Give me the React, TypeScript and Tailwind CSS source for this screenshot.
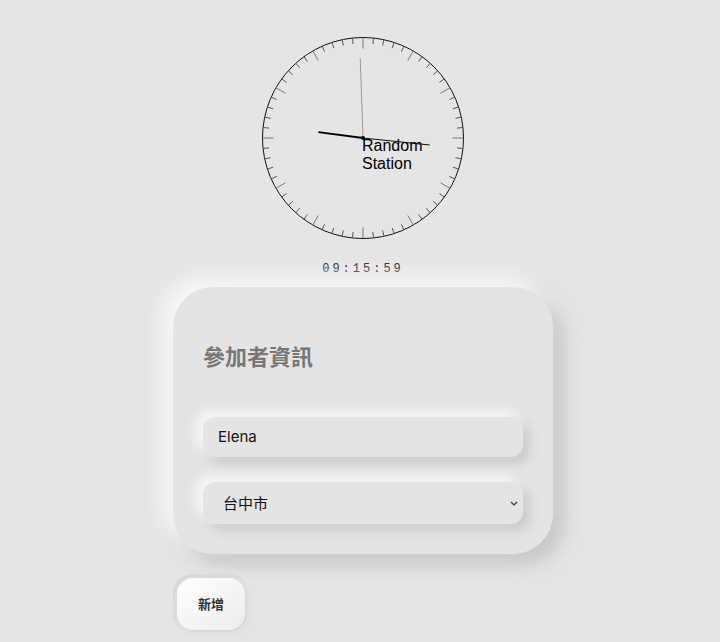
const ticks = Array.from({ length: 60 }, (_, i) => i)

function Clock() {
  const cx = 102
  const cy = 102
  const r = 100.5
  const hand = (deg: number, len: number) => {
    const a = (deg * Math.PI) / 180
    return { x: cx + len * Math.sin(a), y: cy - len * Math.cos(a) }
  }
  const hour = hand(277.5, 45)
  const minute = hand(96, 67)
  const second = hand(358, 80)
  return (
    <svg width="204" height="204" viewBox="0 0 204 204">
      <circle cx={cx} cy={cy} r={r} fill="none" stroke="#111" strokeWidth="1" />
      {ticks.map((i) => {
        const big = i % 5 === 0
        const a = (i * 6 * Math.PI) / 180
        const r1 = big ? r - 11 : r - 6
        return (
          <line
            key={i}
            x1={cx + r1 * Math.sin(a)}
            y1={cy - r1 * Math.cos(a)}
            x2={cx + r * Math.sin(a)}
            y2={cy - r * Math.cos(a)}
            stroke={big ? '#777' : '#555'}
            strokeWidth="1"
          />
        )
      })}
      <line x1={cx} y1={cy} x2={hour.x} y2={hour.y} stroke="#000" strokeWidth="2" />
      <line x1={cx} y1={cy} x2={minute.x} y2={minute.y} stroke="#111" strokeWidth="1.2" />
      <line x1={cx} y1={cy} x2={second.x} y2={second.y} stroke="#999" strokeWidth="1" />
      <circle cx={cx} cy={cy} r="2" fill="#000" />
      <text x={cx - 1} y={cy + 13} fontSize="16" fontFamily="Liberation Sans, Arial, sans-serif" fill="#000">
        Random
      </text>
      <text x={cx - 1} y={cy + 31} fontSize="16" fontFamily="Liberation Sans, Arial, sans-serif" fill="#000">
        Station
      </text>
    </svg>
  )
}

export default function App() {
  return (
    <div className="min-h-[642px] bg-[#e5e5e5] font-['Inter','Noto_Sans_CJK_TC',sans-serif]">
      <div className="flex flex-col items-center pl-[6px] pt-[36px]">
        <Clock />
        <div className="mt-[22px] font-['Liberation_Mono',monospace] text-[12px] leading-[14px] tracking-[3px] text-[#222]">
          09:15:59
        </div>
        <div className="mt-[11px] w-[380px] rounded-[40px] bg-[#e4e4e4] px-[30px] pb-[30px] pt-[52px] shadow-[-10px_-10px_20px_#f8f8f8,10px_10px_20px_#c4c4c4]">
          <h2 className="font-['Noto_Sans_CJK_TC',sans-serif] text-[22px] font-bold leading-[32px] text-[#777]">
            參加者資訊
          </h2>
          <div className="mt-[46px] flex h-[40px] items-center rounded-[12px] bg-[#e4e4e4] px-[15px] text-[15px] text-[#111] shadow-[-6px_-6px_12px_#f7f7f7,6px_6px_12px_#c8c8c8]">
            Elena
          </div>
          <div className="mt-[25px] flex h-[42px] items-center justify-between rounded-[12px] bg-[#e4e4e4] pl-[20px] pr-[4px] font-['Noto_Sans_CJK_TC',sans-serif] text-[15px] text-[#111] shadow-[-6px_-6px_12px_#f7f7f7,6px_6px_12px_#c8c8c8]">
            <span>台中市</span>
            <svg width="10" height="10" viewBox="0 0 10 10">
              <path d="M2 4l3 3 3-3" fill="none" stroke="#333" strokeWidth="1.2" />
            </svg>
          </div>
        </div>
        <div className="mt-[20px] w-[380px]">
          <div className="inline-flex rounded-[20px] p-[4px] shadow-[inset_2px_2px_6px_#d0d0d0,inset_-2px_-2px_6px_#f8f8f8]">
            <button className="h-[52px] w-[68px] rounded-[16px] bg-gradient-to-br from-[#ffffff] to-[#ececec] font-['Noto_Sans_CJK_TC',sans-serif] text-[13px] font-bold text-[#333] shadow-[2px_2px_5px_#cfcfcf]">
              新增
            </button>
          </div>
        </div>
      </div>
    </div>
  )
}
